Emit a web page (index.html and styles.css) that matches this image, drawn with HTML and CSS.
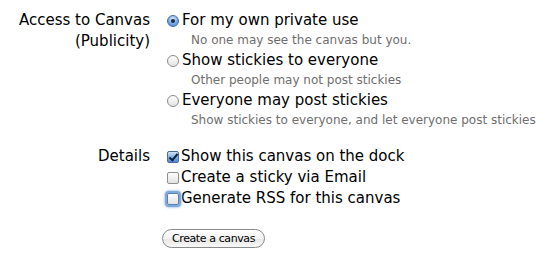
FILE: index.html
```html
<!DOCTYPE html>
<html lang="en">
<head>
  <meta charset="UTF-8">
  <title>Create a canvas</title>
  <link rel="stylesheet" href="styles.css">
</head>
<body>
  <form class="canvas-form">
    <div class="field">
      <div class="field-label">Access to Canvas<br>(Publicity)</div>
      <div class="field-options">
        <label class="option">
          <input type="radio" name="access" class="radio" checked>
          <span class="option-text">For my own private use</span>
        </label>
        <div class="hint">No one may see the canvas but you.</div>
        <label class="option">
          <input type="radio" name="access" class="radio">
          <span class="option-text">Show stickies to everyone</span>
        </label>
        <div class="hint">Other people may not post stickies</div>
        <label class="option">
          <input type="radio" name="access" class="radio">
          <span class="option-text">Everyone may post stickies</span>
        </label>
        <div class="hint">Show stickies to everyone, and let everyone post stickies</div>
      </div>
    </div>

    <div class="field details">
      <div class="field-label">Details</div>
      <div class="field-options">
        <label class="option check-option">
          <input type="checkbox" class="check" checked>
          <span class="option-text">Show this canvas on the dock</span>
        </label>
        <label class="option check-option">
          <input type="checkbox" class="check">
          <span class="option-text">Create a sticky via Email</span>
        </label>
        <label class="option check-option">
          <input type="checkbox" class="check focused">
          <span class="option-text">Generate RSS for this canvas</span>
        </label>
      </div>
    </div>

    <div class="actions">
      <button type="button" class="pill-button">Create a canvas</button>
    </div>
  </form>
</body>
</html>
```

FILE: styles.css
```css
body {
  margin: 0;
  background: #ffffff;
  color: #000000;
  font-family: 'DejaVu Sans', 'Liberation Sans', sans-serif;
}
.canvas-form {
  padding: 10px 0 0 0;
}
.field {
  display: grid;
  grid-template-columns: 150px 1fr;
  column-gap: 16px;
}
.field-label {
  text-align: right;
  font-size: 15px;
  line-height: 21px;
}
.field-options {
  display: flex;
  flex-direction: column;
}
.option {
  display: flex;
  align-items: center;
  font-size: 15px;
  line-height: 21px;
  height: 21px;
}
.hint {
  font-size: 12px;
  line-height: 19px;
  color: #6e6e6e;
  padding-left: 25px;
  white-space: nowrap;
}
.details {
  margin-top: 16px;
}

/* aqua radio */
.radio {
  appearance: none;
  margin: 0 3px 0 1px;
  width: 12px;
  height: 12px;
  border-radius: 50%;
  border: 1px solid #8c8c8c;
  background: linear-gradient(#fdfdfd, #e4e4e4);
  box-sizing: border-box;
  position: relative;
}
.radio:checked {
  border-color: #4a6d9c;
  background: radial-gradient(circle at 50% 30%, #d5e8fb, #6fa5e2 60%, #3d7bd0);
}
.radio:checked::after {
  content: "";
  position: absolute;
  left: 3px;
  top: 3px;
  width: 4px;
  height: 4px;
  border-radius: 50%;
  background: #1a2a40;
}

/* aqua checkbox */
.check {
  appearance: none;
  margin: 0 2px 0 1px;
  width: 12px;
  height: 12px;
  border-radius: 2px;
  border: 1px solid #8f8f8f;
  background: linear-gradient(#fdfdfd, #e2e2e2);
  box-sizing: border-box;
  position: relative;
}
.check:checked {
  border-color: #4a6d9c;
  background: linear-gradient(#cfe3f8, #7fb0e6 55%, #4c88d6);
}
.check:checked::after {
  content: "";
  position: absolute;
  left: 3px;
  top: 0px;
  width: 3px;
  height: 7px;
  border: solid #10203a;
  border-width: 0 2px 2px 0;
  transform: rotate(40deg);
}
.check.focused {
  box-shadow: 0 0 0 2px #7fa8d8, 0 0 2px 3px #b8d2ee;
  border-color: #5b7fae;
}

.actions {
  display: flex;
  padding: 20px 0 0 162px;
}
.pill-button {
  font-family: 'DejaVu Sans', 'Liberation Sans', sans-serif;
  font-size: 11px;
  letter-spacing: -0.4px;
  height: 19px;
  width: 103px;
  padding: 0;
  border: 1px solid #8a8a8a;
  border-radius: 10px;
  background: linear-gradient(#ffffff, #f3f3f3 50%, #e6e6e6 51%, #f8f8f8);
  color: #000;
  line-height: 17px;
}
```
